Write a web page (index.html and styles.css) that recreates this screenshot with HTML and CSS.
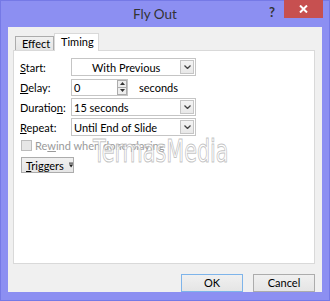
FILE: index.html
```html
<!DOCTYPE html>
<html lang="en">
<head>
    <meta charset="UTF-8">
    <meta name="viewport" content="width=device-width, initial-scale=1.0">
    <title>Fly Out</title>
    <link rel="stylesheet" href="styles.css">
</head>
<body>

    <div class="window">
        <div class="titlebar">
            <span class="title">Fly Out</span>
            <span class="help">?</span>
            <div class="close">
                <svg width="9" height="8" viewBox="0 0 9 8"><path d="M1 0.5 L8 7.5 M8 0.5 L1 7.5" stroke="#fff" stroke-width="2"/></svg>
            </div>
        </div>

        <div class="client">
            <div class="tabs">
                <div class="tab">Effect</div>
                <div class="tab active">Timing</div>
            </div>

            <div class="panel">
                <div class="row">
                    <label><u>S</u>tart:</label>
                    <div class="combo"><span class="value centered">With Previous</span><span class="arrow"><svg width="7" height="4" viewBox="0 0 7 4"><path d="M0.5 0.5 L3.5 3.5 L6.5 0.5" stroke="#444" fill="none" stroke-width="1.3"/></svg></span></div>
                </div>
                <div class="row">
                    <label><u>D</u>elay:</label>
                    <div class="spin">
                        <span class="value">0</span>
                        <span class="spinner">
                            <span class="half"><svg width="5" height="3" viewBox="0 0 5 3"><path d="M0 3 L2.5 0 L5 3 Z" fill="#333"/></svg></span>
                            <span class="half"><svg width="5" height="3" viewBox="0 0 5 3"><path d="M0 0 L2.5 3 L5 0 Z" fill="#333"/></svg></span>
                        </span>
                    </div>
                    <span class="unit">seconds</span>
                </div>
                <div class="row">
                    <label>Duratio<u>n</u>:</label>
                    <div class="combo"><span class="value">15 seconds</span><span class="arrow"><svg width="7" height="4" viewBox="0 0 7 4"><path d="M0.5 0.5 L3.5 3.5 L6.5 0.5" stroke="#444" fill="none" stroke-width="1.3"/></svg></span></div>
                </div>
                <div class="row">
                    <label><u>R</u>epeat:</label>
                    <div class="combo"><span class="value">Until End of Slide</span><span class="arrow"><svg width="7" height="4" viewBox="0 0 7 4"><path d="M0.5 0.5 L3.5 3.5 L6.5 0.5" stroke="#444" fill="none" stroke-width="1.3"/></svg></span></div>
                </div>

                <div class="check">
                    <span class="box"></span>
                    <span>Re<u>w</u>ind when done playing</span>
                </div>

                <div class="triggers">
                    <span><u>T</u>riggers</span>
                    <svg width="7" height="8" viewBox="0 0 7 8"><rect x="0" y="0" width="7" height="1.6" fill="#222"/><path d="M0 3 L7 3 L3.5 8 Z" fill="#222"/></svg>
                </div>

                <div class="watermark">TermasMedia</div>
            </div>

            <div class="buttons">
                <div class="btn default">OK</div>
                <div class="btn">Cancel</div>
            </div>
        </div>
    </div>

</body>
</html>
```

FILE: styles.css
```css
body { margin: 0; font-family: Lato, "Open Sans", sans-serif; font-size: 11px; color: #000; }

.window { width: 330px; height: 301px; box-sizing: border-box; border: 1px solid #7579e6; background: #8c8ff2; display: flex; flex-direction: column; }

.titlebar { height: 26px; display: flex; align-items: flex-start; }
.title { flex: 1; text-align: center; font-size: 13.5px; color: #333; line-height: 26px; margin-left: 40px; }
.help { font-weight: bold; font-size: 13px; color: #333; margin-top: 3px; margin-right: 9px; }
.close { width: 39px; height: 18px; margin-top: -1px; margin-right: 6px; background: #c75050; display: flex; align-items: center; justify-content: center; }

.client { flex: 1; margin: 0 7px 8px 7px; background: #f0f0f0; padding: 5px 7px 0 5px; display: flex; flex-direction: column; }

.tabs { display: flex; align-items: flex-end; height: 18px; padding-left: 2px; }
.tab { height: 13px; line-height: 13px; padding: 0 6px; border: 1px solid #acacac; border-bottom: none; background: linear-gradient(#f0f0f0, #e5e5e5); width: 25px; }
.tab.active { height: 17px; line-height: 16px; width: 31px; background: #fff; border-color: #d9d9d9; margin-bottom: -1px; position: relative; z-index: 1; }

.panel { height: 205px; background: #fff; border: 1px solid #d9d9d9; padding: 7px 0 0 6px; position: relative; }

.row { display: flex; align-items: center; height: 18px; margin-bottom: 2px; }
.row label { width: 51px; }

.combo { width: 125px; height: 18px; box-sizing: border-box; border: 1px solid #c5c5c5; background: #fff; display: flex; align-items: center; }
.value { flex: 1; padding-left: 2px; }
.value.centered { padding-left: 20px; }
.arrow { width: 14px; height: 14px; box-sizing: border-box; border: 1px solid #c5c5c5; background: linear-gradient(#f4f4f4, #e8e8e8); display: flex; align-items: center; justify-content: center; margin-right: 1px; }

.spin { width: 57px; height: 17px; box-sizing: border-box; border: 1px solid #c5c5c5; background: #fff; display: flex; align-items: center; }
.spinner { width: 10px; height: 15px; box-sizing: border-box; border: 1px solid #acacac; background: #eee; display: flex; flex-direction: column; }
.half { flex: 1; display: flex; align-items: center; justify-content: center; }
.half + .half { border-top: 1px solid #acacac; }
.unit { margin-left: 11px; }

.check { display: flex; align-items: center; margin-top: 2px; height: 14px; color: #9a9a9a; }
.box { width: 11px; height: 11px; box-sizing: border-box; border: 1px solid #bcbcbc; background: #e6e6e6; margin: 0 3px 0 1px; }

.triggers { width: 53px; height: 16px; box-sizing: border-box; margin: 5px 0 0 1px; border: 1px solid #acacac; background: linear-gradient(#f0f0f0, #e5e5e5); display: flex; align-items: center; padding-left: 4px; gap: 5px; }

.watermark { position: absolute; left: 79px; top: 82px; font-family: "DejaVu Sans Condensed", sans-serif; font-size: 32px; line-height: 37px; color: rgba(255,255,255,0.75); -webkit-text-stroke: 1px rgba(170,170,170,0.7); transform: scaleX(0.72); transform-origin: left top; pointer-events: none; }

.buttons { display: flex; justify-content: flex-end; gap: 10px; margin-top: 10px; }
.btn { width: 62px; height: 18px; box-sizing: border-box; border: 1px solid #acacac; background: linear-gradient(#f0f0f0, #e5e5e5); text-align: center; line-height: 16px; }
.btn.default { border-color: #7eb4ea; }
```
